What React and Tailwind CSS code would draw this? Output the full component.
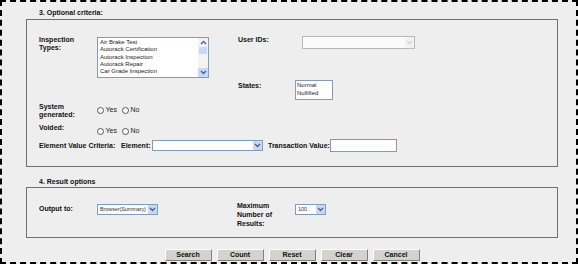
import React from 'react';

const font = { fontFamily: '"Liberation Sans", Arial, sans-serif' };

function Chevron({ up = false, color = "#4d6185" }) {
  return (
    <svg width="7" height="5" viewBox="0 0 7 5">
      <path d={up ? "M1 4 L3.5 1.5 L6 4" : "M1 1 L3.5 3.5 L6 1"} fill="none" stroke={color} strokeWidth="1.4" />
    </svg>
  );
}

function DropArrow({ faded }) {
  return (
    <div className={`w-[10px] h-full flex items-center justify-center border-l ${faded ? "bg-[#f2f2f2] border-[#f8f8f8]" : "bg-[#c9d8f5] border-white"}`}>
      <Chevron color={faded ? "#d6d6d6" : "#4d6185"} />
    </div>
  );
}

function Select({ value, className }) {
  return (
    <div className={`flex bg-white border border-[#7f9db9] ${className}`}>
      <div className="flex-1 text-[5.5px] leading-[9px] pl-[2px] text-[#333] whitespace-nowrap tracking-[-0.1px]">{value}</div>
      <DropArrow />
    </div>
  );
}

function Radio({ label }) {
  return (
    <div className="flex items-center gap-[1.5px]">
      <span className="w-[7px] h-[7px] rounded-full border border-[#555] bg-white" />
      <span className="text-[7px] leading-[8px]">{label}</span>
    </div>
  );
}

function Label({ children, className = "" }) {
  return <div className={`font-bold text-[7px] leading-[8px] text-[#111] ${className}`}>{children}</div>;
}

function Btn({ children }) {
  return (
    <div className="w-[47px] h-[12px] bg-[#d4d2cc] border-t border-l border-t-white border-l-white border-b border-r border-b-[#808080] border-r-[#808080] flex items-center justify-center font-bold text-[7px] text-[#111]">
      {children}
    </div>
  );
}

export default function App() {
  const types = ["Air Brake Test", "Autorack Certification", "Autorack Inspection", "Autorack Repair", "Car Grade Inspection"];

  return (
    <div className="w-[578px] h-[264px] border-2 border-dashed border-black bg-[#eeeeee] pl-[24px] pr-[18px] pt-[7px] overflow-hidden text-[#222]" style={font}>
      <Label className="pl-[13px] mb-[2px]">3. Optional criteria:</Label>

      <div className="h-[148px] border border-[#707070] pt-[16px] pl-[12px]">
        {/* row 1 */}
        <div className="flex h-[42px]">
          <Label className="w-[58px]">Inspection<br />Types:</Label>
          <div className="w-[112px] h-[41px] mt-[1px] border border-[#7f9db9] bg-white flex">
            <div className="flex-1 pl-[2px] pt-[1px] text-[6px] leading-[7.3px] text-[#222] whitespace-nowrap overflow-hidden">
              {types.map(t => <div key={t}>{t}</div>)}
            </div>
            <div className="w-[10px] h-full bg-[#f3f3ef] flex flex-col">
              <div className="h-[9px] flex items-center justify-center bg-[#eef2fc]"><Chevron up /></div>
              <div className="h-[7px] mx-[1px] bg-[#c9d8f5]" />
              <div className="flex-1" />
              <div className="h-[9px] flex items-center justify-center bg-[#c9d8f5]"><Chevron /></div>
            </div>
          </div>
          <Label className="ml-[29px] w-[64px]">User IDs:</Label>
          <div className="w-[113px] h-[13px] border border-[#b8b8b8] bg-[#fbfbfb] flex justify-end">
            <DropArrow faded />
          </div>
        </div>

        {/* row 2 */}
        <div className="flex mt-[2px] h-[20px]">
          <Label className="ml-[199px] w-[57px] pt-[2px]">States:</Label>
          <div className="w-[38px] h-[20px] border border-[#7f9db9] bg-white pl-[1px] text-[6px] leading-[8px]">
            <div>Normal</div>
            <div>Nullified</div>
          </div>
        </div>

        {/* row 3 */}
        <div className="flex mt-[3px] h-[16px]">
          <Label className="w-[58px]">System<br />generated:</Label>
          <div className="flex gap-[5px] mt-[3px] h-[8px]">
            <Radio label="Yes" />
            <Radio label="No" />
          </div>
        </div>

        {/* row 4 */}
        <div className="flex mt-[5px] h-[11px]">
          <Label className="w-[58px]">Voided:</Label>
          <div className="flex gap-[5px] mt-[3px] h-[8px]">
            <Radio label="Yes" />
            <Radio label="No" />
          </div>
        </div>

        {/* row 5 */}
        <div className="flex items-center mt-[4px] h-[13px]">
          <Label className="w-[82px]">Element Value Criteria:</Label>
          <Label className="w-[31px]">Element:</Label>
          <Select value="" className="w-[111px] h-[11px]" />
          <Label className="ml-[5px] w-[62px]">Transaction Value:</Label>
          <div className="w-[67px] h-[13px] border border-[#7f9db9] bg-white" />
        </div>
      </div>

      <Label className="pl-[13px] mt-[11px] mb-[1px]">4. Result options</Label>

      <div className="h-[51px] border border-[#707070] pt-[13px] pl-[12px] flex items-start">
        <Label className="w-[58px] mt-[4px]">Output to:</Label>
        <Select value="Browser(Summary)" className="w-[61px] h-[11px] mt-[3px]" />
        <div className="ml-[79px] w-[58px] font-bold text-[7px] leading-[9px] text-[#111]">Maximum<br />Number of<br />Results:</div>
        <Select value="100" className="w-[31px] h-[11px] mt-[3px]" />
      </div>

      <div className="flex justify-center gap-[5px] mt-[11px]">
        <Btn>Search</Btn>
        <Btn>Count</Btn>
        <Btn>Reset</Btn>
        <Btn>Clear</Btn>
        <Btn>Cancel</Btn>
      </div>
    </div>
  );
}
